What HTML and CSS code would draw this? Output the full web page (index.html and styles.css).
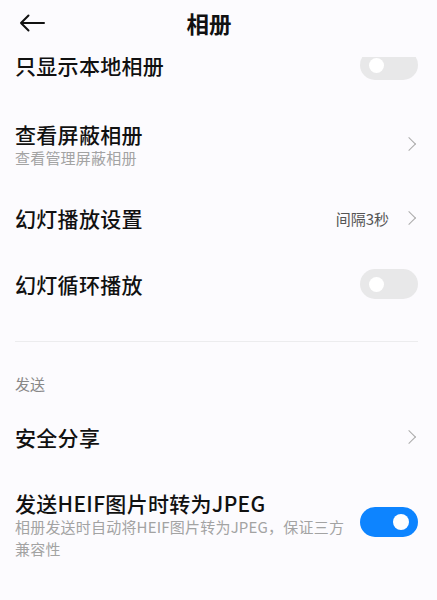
FILE: index.html
```html
<!DOCTYPE html>
<html lang="zh-CN">

<head>
    <meta charset="UTF-8">
    <meta name="viewport" content="width=device-width, initial-scale=1.0">
    <title>相册</title>
    <link rel="stylesheet" href="styles.css">
</head>

<body>
    <div class="header">
        <svg class="back" width="26" height="18" viewBox="0 0 26 18">
            <path d="M25 9H2M9.5 1.5L2 9l7.5 7.5" fill="none" stroke="#111" stroke-width="2" stroke-linecap="round" stroke-linejoin="round"/>
        </svg>
        <div class="title">相册</div>
    </div>

    <div class="scroll">
        <div class="content">
            <div class="row row-first">
                <div class="text">
                    <div class="name">只显示本地相册</div>
                </div>
                <div class="switch"><span class="knob"></span></div>
            </div>

            <div class="row row-sub">
                <div class="text">
                    <div class="name">查看屏蔽相册</div>
                    <div class="desc">查看管理屏蔽相册</div>
                </div>
                <span class="chevron"></span>
            </div>

            <div class="row">
                <div class="text">
                    <div class="name">幻灯播放设置</div>
                </div>
                <span class="value">间隔3秒</span>
                <span class="chevron"></span>
            </div>

            <div class="row">
                <div class="text">
                    <div class="name">幻灯循环播放</div>
                </div>
                <div class="switch"><span class="knob"></span></div>
            </div>

            <div class="divider"></div>

            <div class="section">发送</div>

            <div class="row">
                <div class="text">
                    <div class="name">安全分享</div>
                </div>
                <span class="chevron"></span>
            </div>

            <div class="row row-long">
                <div class="text">
                    <div class="name">发送HEIF图片时转为JPEG</div>
                    <div class="desc">相册发送时自动将HEIF图片转为JPEG，保证三方兼容性</div>
                </div>
                <div class="switch on"><span class="knob"></span></div>
            </div>
        </div>
    </div>
</body>

</html>
```

FILE: styles.css
```css
body {
    margin: 0;
    background-color: #fcfbfe;
    font-family: "Noto Sans CJK SC", "Noto Sans", sans-serif;
    color: #111;
}

.header {
    height: 45px;
    display: flex;
    align-items: center;
    padding: 0 19px;
    background-color: #fcfbfe;
}

.back {
    display: block;
}

.title {
    flex: 1;
    text-align: center;
    font-size: 22.5px;
    font-weight: 700;
    margin-right: 45px;
}

.scroll {
    height: 555px;
    overflow: hidden;
    border-top: 12px solid #fcfbfe;
    box-sizing: border-box;
}

.content {
    margin-top: -18px;
}

.row {
    display: flex;
    align-items: center;
    padding: 0 19px 0 15px;
    min-height: 66px;
}

.row-first {
    min-height: 52px;
}

.row-sub {
    min-height: 82px;
    padding-top: 12px;
}

.row-long {
    padding-top: 19px;
}

.row-long .switch {
    margin-bottom: 6px;
}

.text {
    flex: 1;
}

.name {
    font-size: 21px;
    font-weight: 500;
    line-height: 28px;
    letter-spacing: 0.3px;
}

.desc {
    font-size: 15px;
    color: #a3a3a3;
    line-height: 22px;
    margin-top: -1px;
    letter-spacing: 0.2px;
}

.value {
    font-size: 15px;
    color: #555;
    margin-right: 15px;
}

.chevron {
    width: 9px;
    height: 9px;
    border-top: 1.5px solid #aaa;
    border-right: 1.5px solid #aaa;
    transform: rotate(45deg);
    margin-right: 4px;
}

.switch {
    width: 58px;
    height: 30px;
    border-radius: 15px;
    background-color: #e8e8e9;
    display: flex;
    align-items: center;
    padding: 0 9px;
    box-sizing: border-box;
    margin-left: 8px;
    flex-shrink: 0;
}

.knob {
    width: 15px;
    height: 15px;
    border-radius: 50%;
    background-color: #fff;
}

.switch.on {
    background-color: #0d84ff;
    justify-content: flex-end;
}

.switch.on .knob {
    width: 16px;
    height: 16px;
}

.divider {
    height: 1px;
    background-color: #ececee;
    margin: 24px 19px 0 15px;
}

.section {
    font-size: 15px;
    color: #888;
    line-height: 21px;
    padding: 31px 15px 10px;
}
```
